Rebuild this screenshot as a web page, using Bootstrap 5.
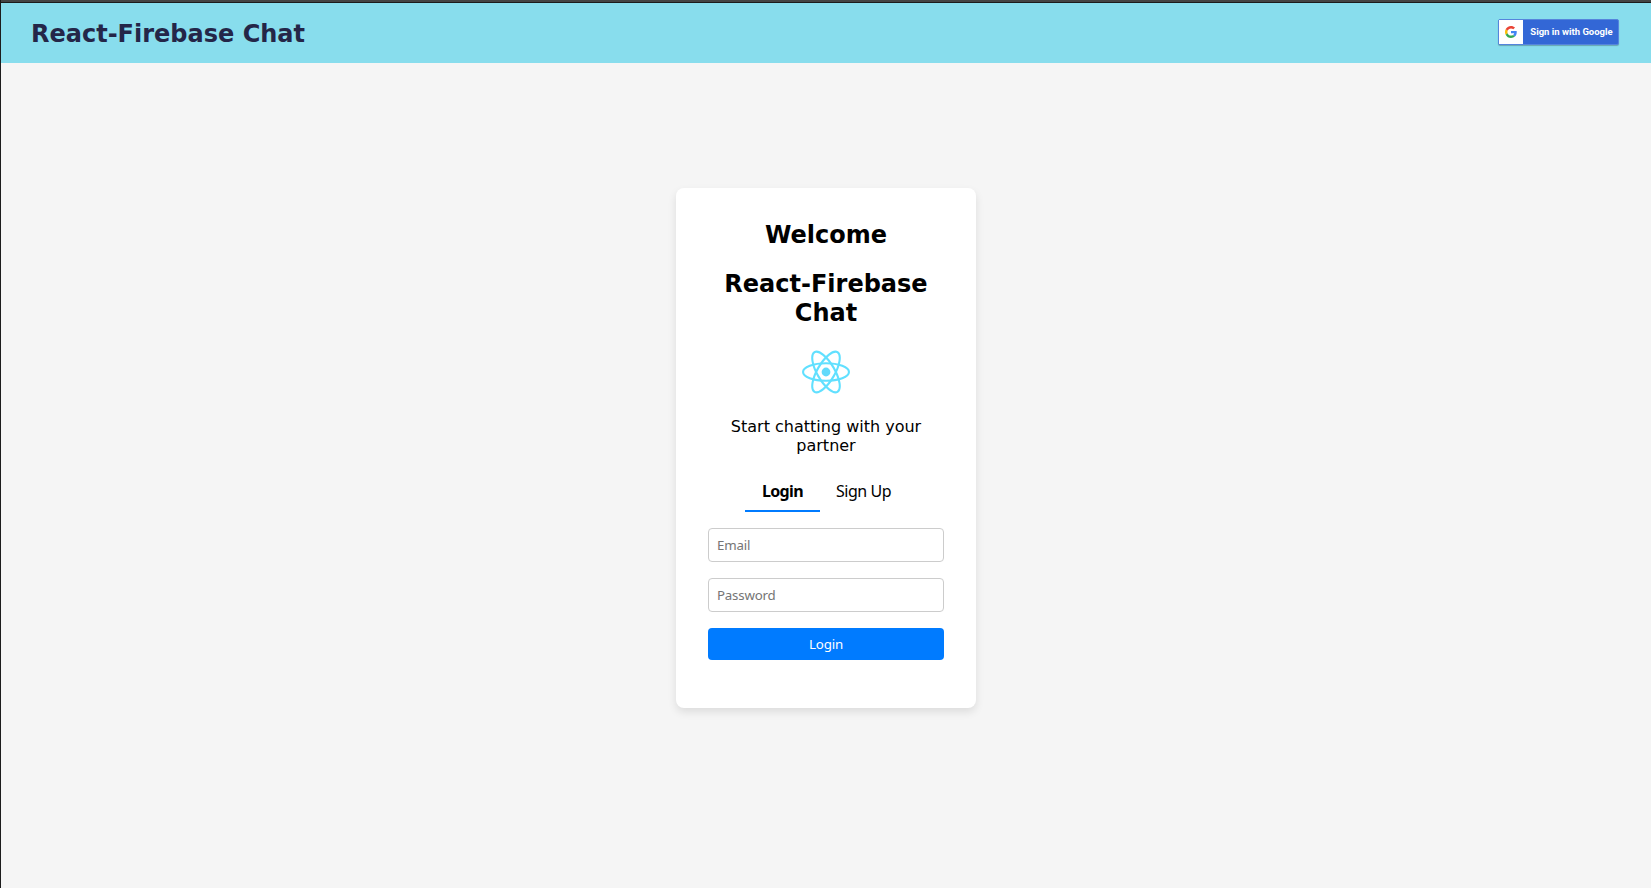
<!DOCTYPE html>
<html lang="en">
<head>
<meta charset="utf-8">
<title>React-Firebase Chat</title>
<link href="https://cdn.jsdelivr.net/npm/bootstrap@5.3.0/dist/css/bootstrap.min.css" rel="stylesheet">
<style>
body{font-family:"DejaVu Sans",sans-serif;background:#f5f5f5;color:#000;height:100vh;border-left:1px solid #1c1c1c;overflow:hidden}
.window-edge{height:3px;background:#444;border-bottom:1px solid #1c1c1c}
.site-header{height:60px;background:#88dded;padding:0 32px 0 30px}
.site-title{font-size:24px;line-height:29px;font-weight:700;color:#242648;padding-top:2px}
.login-card{width:300px;height:520px;margin-top:125px;border:0;border-radius:8px;padding:33px 32px 31px;box-shadow:0 4px 8px rgba(0,0,0,.1);color:#000}
.login-card h2{font-size:24px;line-height:29px;font-weight:700;margin-bottom:20px}
.intro{font-size:16px;line-height:19px;margin:23px 0 16px}
.react-logo{margin:2px auto 0}
.tab-btn,.login-card .form-control,.btn-login{font-family:"Noto Sans",sans-serif;letter-spacing:-.2px}
.tab-btn{border:0;border-bottom:2px solid transparent;background:none;color:#000;font-size:16px;line-height:22px;padding:8px 16px;height:41px;white-space:nowrap;letter-spacing:-.45px}
.tab-btn.active{border-color:#007bff;font-weight:700;width:75px;letter-spacing:-.65px}
.login-card .form-control{height:34px;border:1px solid #ccc;border-radius:4px;padding:0 8px;font-size:13.3px;margin-bottom:16px}
.form-control::placeholder{color:#757575}
.btn-login{height:32px;background:#007bff;color:#fff;border:0;border-radius:4px;font-size:13.3px;line-height:32px;padding:0}
.google-btn{width:121px;height:26px;margin-bottom:2px;background:#3367d6;border:1px solid #5585dd;border-radius:2px;padding:0;box-shadow:0 1px 1px rgba(0,0,0,.25);color:#fff;font:700 9.5px/24px Roboto,sans-serif}
.google-mark{width:24px;height:24px;background:#fff}
.google-label{padding-left:2px}
</style>
</head>
<body class="d-flex flex-column">
<div class="window-edge flex-shrink-0"></div>
<header class="site-header d-flex align-items-center justify-content-between flex-shrink-0">
<h1 class="site-title mb-0">React-Firebase Chat</h1>
<button class="google-btn d-flex align-items-center">
<span class="google-mark d-flex align-items-center justify-content-center flex-shrink-0"><svg width="12" height="12" viewBox="0 0 48 48"><path fill="#EA4335" d="M24 9.5c3.54 0 6.71 1.22 9.21 3.6l6.85-6.85C35.9 2.38 30.47 0 24 0 14.62 0 6.51 5.38 2.56 13.22l7.98 6.19C12.43 13.72 17.74 9.5 24 9.5z"/><path fill="#4285F4" d="M46.98 24.55c0-1.57-.15-3.09-.38-4.55H24v9.02h12.94c-.58 2.96-2.26 5.48-4.78 7.18l7.73 6c4.51-4.18 7.09-10.36 7.09-17.65z"/><path fill="#FBBC05" d="M10.53 28.59c-.48-1.45-.76-2.99-.76-4.59s.27-3.14.76-4.59l-7.98-6.19C.92 16.46 0 20.12 0 24c0 3.88.92 7.54 2.56 10.78l7.97-6.19z"/><path fill="#34A853" d="M24 48c6.48 0 11.93-2.13 15.89-5.81l-7.73-6c-2.15 1.45-4.92 2.3-8.16 2.3-6.26 0-11.57-4.22-13.47-9.91l-7.98 6.19C6.51 42.62 14.62 48 24 48z"/></svg></span>
<span class="google-label flex-grow-1 text-center text-nowrap">Sign in with Google</span>
</button>
</header>
<main class="d-flex justify-content-center">
<section class="card login-card text-center">
<h2>Welcome</h2>
<h2>React-Firebase Chat</h2>
<svg class="react-logo d-block flex-shrink-0" width="48" height="44" viewBox="-11.5 -10.5 23 21"><circle r="2.1" fill="#61dafb"/><g fill="none" stroke="#61e0ff" stroke-width="1"><ellipse rx="11" ry="4.2"/><ellipse rx="11" ry="4.2" transform="rotate(60)"/><ellipse rx="11" ry="4.2" transform="rotate(120)"/></g></svg>
<p class="intro">Start chatting with your partner</p>
<div class="d-flex justify-content-center mb-3"><button class="tab-btn active">Login</button><button class="tab-btn">Sign Up</button></div>
<form>
<input class="form-control" type="email" placeholder="Email" aria-label="Email">
<input class="form-control" type="password" placeholder="Password" aria-label="Password">
<button type="button" class="btn btn-login w-100 d-block">Login</button>
</form>
</section>
</main>
<script src="https://cdn.jsdelivr.net/npm/bootstrap@5.3.0/dist/js/bootstrap.bundle.min.js"></script>
</body>
</html>
